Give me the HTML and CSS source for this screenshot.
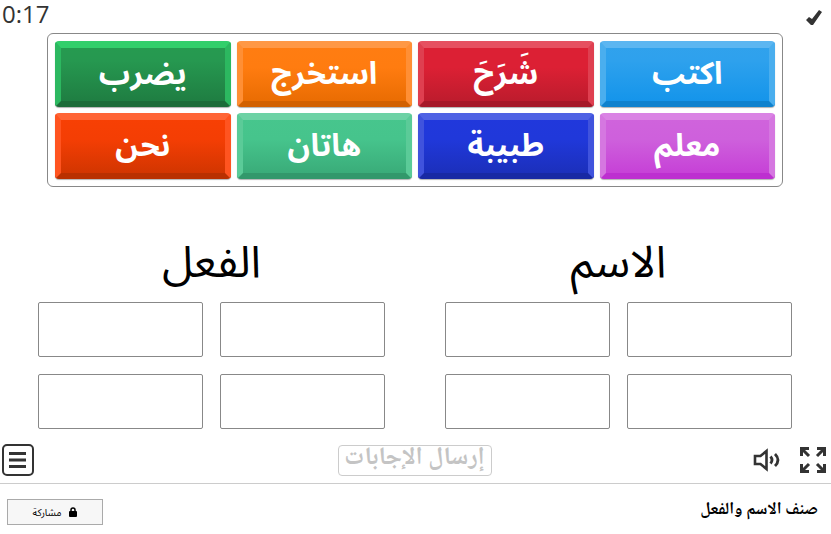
FILE: index.html
```html
<!DOCTYPE html>
<html lang="ar">
<head>
	<meta charset="utf-8">
	<title>صنف الاسم والفعل</title>
	<link rel="stylesheet" href="styles.css">
</head>

<body>
<main class="game">
	<header class="status">
		<span class="timer">0:17</span>
		<svg class="tick" viewBox="0 0 16 16" aria-hidden="true">
			<path d="M0 10 L3 7 L6 9 L13 0 L16 2 L7 15 L5 15 Z" fill="#333"/>
		</svg>
	</header>

	<div class="tiles">
		<button type="button" class="tile green">يضرب</button>
		<button type="button" class="tile orange">استخرج</button>
		<button type="button" class="tile red">شَرَحَ</button>
		<button type="button" class="tile sky">اكتب</button>
		<button type="button" class="tile scarlet">نحن</button>
		<button type="button" class="tile mint">هاتان</button>
		<button type="button" class="tile blue">طبيبة</button>
		<button type="button" class="tile violet">معلم</button>
	</div>

	<div class="groups">
		<section class="group">
			<h2>الفعل</h2>
			<div class="slots">
				<div class="slot"></div>
				<div class="slot"></div>
				<div class="slot"></div>
				<div class="slot"></div>
			</div>
		</section>
		<section class="group">
			<h2>الاسم</h2>
			<div class="slots">
				<div class="slot"></div>
				<div class="slot"></div>
				<div class="slot"></div>
				<div class="slot"></div>
			</div>
		</section>
	</div>

	<div class="controls">
		<button type="button" class="icon-button" aria-label="القائمة">
			<svg width="32" height="32" viewBox="0 0 32 32">
				<rect x="1" y="1" width="30" height="30" rx="4" fill="none" stroke="#333" stroke-width="2"/>
				<path d="M7 9.5H24M7 16H24M7 22.5H24" stroke="#333" stroke-width="3"/>
			</svg>
		</button>
		<button type="button" class="submit" disabled>إرسال الإجابات</button>
		<div class="right">
			<button type="button" class="icon-button" aria-label="الصوت">
				<svg width="28" height="24" viewBox="0 0 28 24">
					<path d="M2 8H7.5L13.5 3V21L7.5 16H2Z" fill="none" stroke="#333" stroke-width="2.6"/>
					<path d="M17.5 8.5Q20.5 12 17.5 15.5M22 6Q28 12 22 18" fill="none" stroke="#333" stroke-width="2.8"/>
				</svg>
			</button>
			<button type="button" class="icon-button" aria-label="ملء الشاشة">
				<svg width="28" height="28" viewBox="0 0 28 28">
					<g fill="none" stroke="#333" stroke-width="3">
						<path d="M2.5 10V2.5H10M3 3L10 10"/>
						<path d="M18 2.5H25.5V10M25 3L18 10"/>
						<path d="M2.5 18V25.5H10M3 25L10 18"/>
						<path d="M18 25.5H25.5V18M25 25L18 18"/>
					</g>
				</svg>
			</button>
		</div>
	</div>
</main>

<footer class="footer">
	<button type="button" class="share" dir="rtl">
		<svg width="8" height="10" viewBox="0 0 8 10" aria-hidden="true">
			<path d="M2 5V3Q2 1 4 1T6 3V5" fill="none" stroke="#000" stroke-width="1.5"/>
			<rect y="4" width="8" height="6" rx="1"/>
		</svg>
		مشاركة
	</button>
	<h1 dir="rtl">صنف الاسم والفعل</h1>
</footer>
</body>
</html>
```
FILE: styles.css
```css
* {
	box-sizing: border-box;
}

body {
	margin: 0;
	background: #fff;
	color: #000;
	font-family: "Open Sans", "Noto Sans Arabic", "Noto Sans", "DejaVu Sans", sans-serif;
}

button {
	margin: 0;
	padding: 0;
	font-family: inherit;
}

svg {
	display: block;
}

.game {
	border-bottom: 1px solid #ccc;
}

.status {
	display: flex;
	justify-content: space-between;
	align-items: flex-start;
	height: 33px;
	padding: 0 9px 0 2px;
}

.timer {
	color: #333;
	font-size: 24px;
	font-weight: 500;
	line-height: 28px;
}

.tick {
	width: 16px;
	height: 16px;
	margin-top: 10px;
}

.tiles {
	display: grid;
	grid-template-columns: repeat(4, 1fr);
	gap: 6px;
	margin: 0 48px 0 47px;
	padding: 7px;
	border: 1px solid #888;
	border-radius: 6px;
}

.tile {
	height: 66px;
	padding-bottom: 6px;
	border-style: solid;
	border-width: 7px 6px 6px;
	border-radius: 4px;
	background-origin: border-box;
	box-shadow: 0 1px 1px rgba(0, 0, 0, .3);
	color: #fff;
	font-size: 31px;
	font-weight: bold;
	line-height: 46px;
}

.green {
	background-image: linear-gradient(#269b50, #269850 30%, #1e7a40);
	border-color: #32cf6b #2cb860 #1c6c39;
}

.orange {
	background-image: linear-gradient(#ff7d12, #ff7c10 40%, #e66a00);
	border-color: #ff9845 #ff8f35 #d26000;
}

.red {
	background-image: linear-gradient(#dc2034, #dc2034 40%, #b81b2c);
	border-color: #e65060 #df3f50 #a61828;
}

.sky {
	background-image: linear-gradient(#31a2ec, #2ea1ed 30%, #1193ea);
	border-color: #5cb6f1 #4aaeee #0f82ce;
}

.scarlet {
	background-image: linear-gradient(#f84004, #f43e04 40%, #cc3400);
	border-color: #ff6536 #ff5420 #b93000;
}

.mint {
	background-image: linear-gradient(#47c68d, #46c48c 40%, #38a876);
	border-color: #6dd2a5 #5bcb98 #32986b;
}

.blue {
	background-image: linear-gradient(#2138dc, #2038da 40%, #1b2eb6);
	border-color: #4f62e4 #4053dd #1829a4;
}

.violet {
	background-image: linear-gradient(#d064dc, #ce60dc 40%, #c53cd6);
	border-color: #da83e4 #d577e0 #bd2fd0;
}

.groups {
	display: grid;
	grid-template-columns: 1fr 1fr;
	gap: 60px;
	padding: 40px 39px 0 38px;
}

.group h2 {
	margin: 0;
	padding-bottom: 9px;
	font-size: 44px;
	font-weight: normal;
	line-height: 66px;
	text-align: center;
}

.slots {
	display: grid;
	grid-template-columns: 1fr 1fr;
	gap: 17px;
}

.slot {
	height: 55px;
	border: 1px solid #888;
	border-radius: 2px;
}

.controls {
	display: grid;
	grid-template-columns: 1fr auto 1fr;
	align-items: center;
	height: 54px;
	padding: 8px 4px 0 2px;
}

.icon-button {
	justify-self: start;
	border: 0;
	background: none;
}

.submit {
	width: 154px;
	height: 31px;
	padding-bottom: 3px;
	border: 1px solid #ccc;
	border-radius: 4px;
	background: #fff;
	color: #c4c4c4;
	font-family: "Noto Naskh Arabic", "DejaVu Sans", serif;
	font-size: 25px;
	font-weight: bold;
	line-height: 24px;
}

.right {
	display: flex;
	align-items: center;
	justify-self: end;
	gap: 18px;
}

.footer {
	display: flex;
	align-items: center;
	justify-content: space-between;
	padding: 12px 13px 8px 7px;
}

.share {
	display: flex;
	align-items: center;
	justify-content: center;
	gap: 8px;
	width: 96px;
	height: 26px;
	margin-top: 3px;
	border: 1px solid #aaa;
	background: #f7f7f7;
	color: #000;
	font-size: 10px;
}

.footer h1 {
	margin: 0;
	font-family: "Noto Naskh Arabic", "DejaVu Sans", sans-serif;
	font-size: 17px;
	line-height: 20px;
}
```
